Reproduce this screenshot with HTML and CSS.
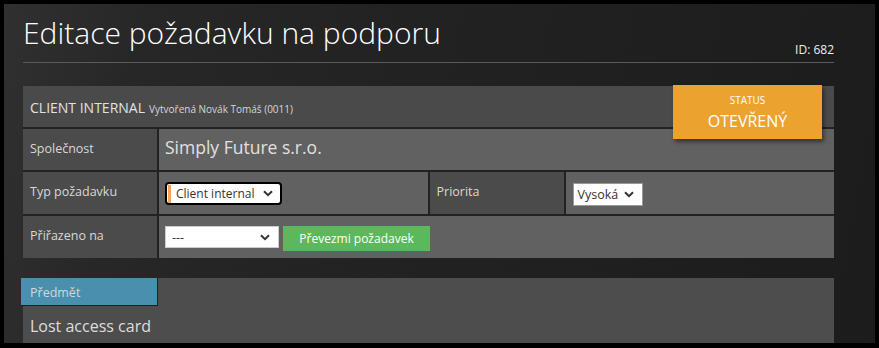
FILE: index.html
```html
<!DOCTYPE html>
<html lang="cs">
<head>
    <meta charset="UTF-8">
    <title>Editace požadavku na podporu</title>
    <link rel="stylesheet" href="styles.css">
</head>
<body>
<div class="window">
    <div class="page">
        <div class="page-head">
            <h1>Editace požadavku na podporu</h1>
            <span class="ticket-id">ID: 682</span>
        </div>

        <div class="ticket">
            <div class="ticket-head">
                <span class="ticket-type">CLIENT INTERNAL</span>
                <small>Vytvořená Novák Tomáš (0011)</small>
                <div class="status">
                    <span>STATUS</span>
                    <strong>OTEVŘENÝ</strong>
                </div>
            </div>

            <div class="label">Společnost</div>
            <div class="value wide company">Simply Future s.r.o.</div>

            <div class="label">Typ požadavku</div>
            <div class="value">
                <div class="select select-focus">
                    <span class="flag"></span>
                    <span class="select-text">Client internal</span>
                    <svg class="chevron" width="10" height="7" viewBox="0 0 10 7"><path d="M1 1.2 L5 5.2 L9 1.2" /></svg>
                </div>
            </div>
            <div class="label">Priorita</div>
            <div class="value">
                <div class="select select-small">
                    <span class="select-text">Vysoká</span>
                    <svg class="chevron" width="10" height="7" viewBox="0 0 10 7"><path d="M1 1.2 L5 5.2 L9 1.2" /></svg>
                </div>
            </div>

            <div class="label">Přiřazeno na</div>
            <div class="value wide assign">
                <div class="select select-user">
                    <span class="select-text">---</span>
                    <svg class="chevron" width="10" height="7" viewBox="0 0 10 7"><path d="M1 1.2 L5 5.2 L9 1.2" /></svg>
                </div>
                <button class="btn-take">Převezmi požadavek</button>
            </div>
        </div>

        <div class="subject">
            <div class="tab">Předmět</div>
            <div class="subject-text">Lost access card</div>
        </div>
    </div>
</div>
</body>
</html>
```

FILE: styles.css
```css
body, html {
    margin: 0;
    height: 100%;
    background: #000;
    overflow: hidden;
    font-family: "Open Sans", "Noto Sans", sans-serif;
}
.window {
    margin: 4px;
    height: 339px;
    overflow: hidden;
    background: linear-gradient(100deg, #303030 0%, #272727 15%, #222 45%, #1c1c1c 100%);
}
.page {
    padding: 9px 41px 0 19px;
}
.page-head {
    display: flex;
    justify-content: space-between;
    align-items: flex-end;
    padding-bottom: 4px;
    border-bottom: 1px solid #5a5a5a;
}
h1 {
    margin: 0 0 5px 0;
    font-size: 30px;
    font-weight: 300;
    line-height: 40px;
    color: #fff;
}
.ticket-id {
    font-size: 12px;
    line-height: 16px;
    color: #eee;
}
.ticket {
    margin-top: 23px;
    display: grid;
    grid-template-columns: 134px 1fr 134px 1fr;
    grid-template-rows: 41px 41px 42px 42px;
    gap: 2px;
    background: #222;
}
.ticket-head {
    grid-column: 1 / 5;
    position: relative;
    display: flex;
    align-items: baseline;
    gap: 4px;
    padding: 12px 7px 0;
    background: #4a4a4a;
    color: #e2e2e2;
}
.ticket-type {
    font-size: 14px;
    line-height: 20px;
}
.ticket-head small {
    font-size: 10px;
    color: #d6d6d6;
}
.status {
    position: absolute;
    top: -1px;
    right: 12px;
    width: 149px;
    height: 54px;
    box-sizing: border-box;
    padding-top: 8px;
    background: #eca22f;
    color: #fff;
    text-align: center;
    box-shadow: 2px 3px 4px rgba(0, 0, 0, 0.45);
}
.status span {
    display: block;
    font-size: 10px;
    line-height: 14px;
}
.status strong {
    display: block;
    margin-top: 4px;
    font-size: 16px;
    font-weight: 400;
    line-height: 20px;
}
.label {
    padding: 10px 7px;
    background: #4b4b4b;
    color: #d8d8d8;
    font-size: 12.5px;
    line-height: 20px;
}
.value {
    padding: 10px 6px;
    background: #616161;
}
.wide {
    grid-column: 2 / 5;
}
.company {
    padding-top: 8px;
    color: #e0e0e0;
    font-size: 17.5px;
    line-height: 20px;
}
.select {
    display: inline-flex;
    align-items: center;
    gap: 6px;
    box-sizing: border-box;
    height: 23px;
    padding: 0 8px 0 4px;
    background: #fff;
    border: 1px solid #999;
    color: #333;
    font-size: 12.5px;
    white-space: nowrap;
}
.select-text {
    flex: 1;
}
.chevron {
    flex: none;
}
.chevron path {
    fill: none;
    stroke: #333;
    stroke-width: 2;
}
.select-focus {
    width: 117px;
    gap: 5px;
    padding: 0 7px 0 1px;
    border: 2px solid #000;
    border-radius: 4px;
    box-shadow: inset 0 0 0 1px #fff;
    font-size: 12px;
}
.flag {
    flex: none;
    width: 3px;
    height: 18px;
    background: #f2a35e;
}
.select-small {
    margin-left: 1px;
}
.assign {
    display: flex;
    align-items: flex-start;
    gap: 4px;
}
.select-user {
    width: 114px;
    height: 22px;
    padding-left: 6px;
    border-color: #ccc;
}
.btn-take {
    width: 147px;
    height: 25px;
    padding: 0;
    border: none;
    background: #5cb85c;
    color: #fff;
    font-family: inherit;
    font-size: 12px;
}
.subject {
    margin-top: 20px;
    height: 80px;
    background: #4d4d4d;
}
.tab {
    width: 127px;
    height: 27px;
    margin-left: -2px;
    padding-left: 9px;
    background: #4a8fad;
    border-right: 1px solid #222;
    border-bottom: 1px solid #1e1e1e;
    color: #cfd8dc;
    font-size: 12.5px;
    line-height: 29px;
}
.subject-text {
    margin-top: 10px;
    padding-left: 7px;
    color: #ddd;
    font-size: 16px;
    line-height: 20px;
}
```
